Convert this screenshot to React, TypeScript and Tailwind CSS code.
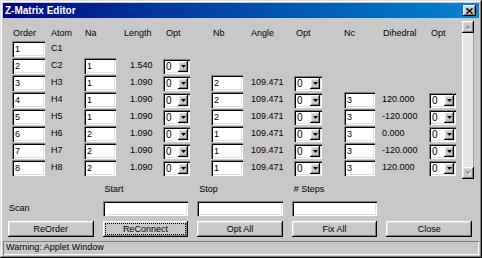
import React from "react";

type Row = {
  o: string;
  a: string;
  na?: string;
  len?: string;
  nb?: string;
  ang?: string;
  nc?: string;
  dih?: string;
};

const rows: Row[] = [
  { o: "1", a: "C1" },
  { o: "2", a: "C2", na: "1", len: "1.540" },
  { o: "3", a: "H3", na: "1", len: "1.090", nb: "2", ang: "109.471" },
  { o: "4", a: "H4", na: "1", len: "1.090", nb: "2", ang: "109.471", nc: "3", dih: "120.000" },
  { o: "5", a: "H5", na: "1", len: "1.090", nb: "2", ang: "109.471", nc: "3", dih: "-120.000" },
  { o: "6", a: "H6", na: "2", len: "1.090", nb: "1", ang: "109.471", nc: "3", dih: "0.000" },
  { o: "7", a: "H7", na: "2", len: "1.090", nb: "1", ang: "109.471", nc: "3", dih: "-120.000" },
  { o: "8", a: "H8", na: "2", len: "1.090", nb: "1", ang: "109.471", nc: "3", dih: "120.000" },
];

const sunken =
  "bg-white shadow-[inset_1px_1px_#808080,inset_2px_2px_#000,inset_-1px_-1px_#fff,inset_-2px_-2px_#dfdfdf]";
const raised =
  "bg-[#c8c8c8] shadow-[inset_-1px_-1px_#000,inset_1px_1px_#fff,inset_-2px_-2px_#808080,inset_2px_2px_#dfdfdf]";

function Field({ value, w }: { value: string; w: string }) {
  return (
    <div className={`${sunken} ${w} h-[16px] flex items-center pl-[3px] leading-none`}>
      {value}
    </div>
  );
}

function Combo({ w }: { w: string }) {
  return (
    <div className={`${sunken} ${w} h-[15px] flex items-center justify-between pl-[3px] pr-[2px] leading-none`}>
      <span className="text-[10px]">0</span>
      <div className={`${raised} w-[10px] h-[11px] flex items-center justify-center`}>
        <svg width="5" height="3" viewBox="0 0 5 3">
          <path d="M0 0h5L2.5 3z" fill="#000" />
        </svg>
      </div>
    </div>
  );
}

function ScrollArrow({ up }: { up: boolean }) {
  return (
    <div className={`${raised} w-[12px] h-[12px] flex items-center justify-center`}>
      <svg width="7" height="5" viewBox="0 0 7 5">
        {up ? (
          <>
            <path d="M1.5 4.5h5L4 1.5z" fill="#fff" />
            <path d="M0.5 3.5h5L3 0.5z" fill="#8a8a8a" />
          </>
        ) : (
          <>
            <path d="M1.5 1.5h5L4 4.5z" fill="#fff" />
            <path d="M0.5 0.5h5L3 3.5z" fill="#8a8a8a" />
          </>
        )}
      </svg>
    </div>
  );
}

const cols = "grid grid-cols-[39px_33px_40px_39px_48px_40px_43px_50px_38px_47px_29px]";

export default function App() {
  return (
    <div
      className="w-[482px] h-[258px] bg-[#c8c8c8] p-[3px] flex flex-col text-[9px] text-black shadow-[inset_-1px_-1px_#000,inset_1px_1px_#dfdfdf,inset_-2px_-2px_#808080,inset_2px_2px_#fff] overflow-hidden"
      style={{ fontFamily: '"Liberation Sans", Arial, sans-serif' }}
    >
      {/* Title bar */}
      <div className="h-[15px] bg-gradient-to-r from-[#000080] to-[#1084d0] flex items-center justify-between pl-[2px] pr-[3px]">
        <span className="text-white font-bold text-[10px] leading-none">Z-Matrix Editor</span>
        <div className={`${raised} w-[13px] h-[11px] flex items-center justify-center`}>
          <svg width="7" height="6" viewBox="0 0 7 6">
            <path d="M0.5 0.5L6.5 5.5M6.5 0.5L0.5 5.5" stroke="#000" strokeWidth="1.5" />
          </svg>
        </div>
      </div>

      {/* Body */}
      <div className="flex items-start pt-[3px]">
        <div className="flex-1 pl-[9px] pt-[3px]">
          <div className={`${cols} h-[17px] items-center leading-[16px]`}>
            <div className="pl-[1px]">Order</div>
            <div>Atom</div>
            <div className="pl-[1px]">Na</div>
            <div>Length</div>
            <div className="pl-[3px]">Opt</div>
            <div className="pl-[2px]">Nb</div>
            <div>Angle</div>
            <div className="pl-[2px]">Opt</div>
            <div>Nc</div>
            <div className="pl-[1px]">Dihedral</div>
            <div className="pl-[2px]">Opt</div>
          </div>
          {rows.map((r) => (
            <div key={r.o} className={`${cols} h-[17px] items-start`}>
              <Field value={r.o} w="w-[33px]" />
              <div className="h-[16px] flex items-center">{r.a}</div>
              <div>{r.na && <Field value={r.na} w="w-[32px]" />}</div>
              <div className="h-[16px] flex items-center pl-[6px]">{r.len}</div>
              <div className="pt-[1px]">{r.len && <Combo w="w-[27px]" />}</div>
              <div>{r.nb && <Field value={r.nb} w="w-[32px]" />}</div>
              <div className="h-[16px] flex items-center">{r.ang}</div>
              <div className="pt-[1px]">{r.ang && <Combo w="w-[28px]" />}</div>
              <div>{r.nc && <Field value={r.nc} w="w-[31px]" />}</div>
              <div className="h-[16px] flex items-center">{r.dih}</div>
              <div className="pt-[1px]">{r.dih && <Combo w="w-[27px]" />}</div>
            </div>
          ))}
        </div>
        <div className="w-[12px] h-[158px] mr-[5px] flex flex-col">
          <ScrollArrow up />
          <div className="flex-1 bg-[#e6e6e6] shadow-[inset_1px_0_#fff,inset_-1px_0_#a0a0a0]" />
          <ScrollArrow up={false} />
        </div>
      </div>

      {/* Bottom controls */}
      <div className="mt-[2px] pl-[5px] pr-[7px] grid grid-cols-5 gap-x-[9px]">
        <div className="h-[16px]" />
        <div className="h-[16px] leading-[16px] pl-[2px]">Start</div>
        <div className="h-[16px] leading-[16px] pl-[2px]">Stop</div>
        <div className="h-[16px] leading-[16px] pl-[2px]"># Steps</div>
        <div className="h-[16px]" />

        <div className="mt-[4px] h-[15px] flex items-center pl-[1px]">Scan</div>
        <div className={`mt-[4px] h-[15px] ${sunken}`} />
        <div className={`mt-[4px] h-[15px] ${sunken}`} />
        <div className={`mt-[4px] h-[15px] ${sunken}`} />
        <div className="mt-[4px] h-[15px]" />

        <div className={`mt-[5px] h-[16px] ${raised} flex items-center justify-center leading-none`}>ReOrder</div>
        <div className={`mt-[5px] h-[16px] ${raised} p-[2px]`}>
          <div className="w-full h-full border border-dotted border-black flex items-center justify-center leading-none">
            ReConnect
          </div>
        </div>
        <div className={`mt-[5px] h-[16px] ${raised} flex items-center justify-center leading-none`}>Opt All</div>
        <div className={`mt-[5px] h-[16px] ${raised} flex items-center justify-center leading-none`}>Fix All</div>
        <div className={`mt-[5px] h-[16px] ${raised} flex items-center justify-center leading-none`}>Close</div>
      </div>

      {/* Status bar */}
      <div className="mt-[4px] h-[14px] flex items-center pl-[3px] shadow-[inset_1px_1px_#808080,inset_-1px_-1px_#fff]">
        Warning: Applet Window
      </div>
    </div>
  );
}
